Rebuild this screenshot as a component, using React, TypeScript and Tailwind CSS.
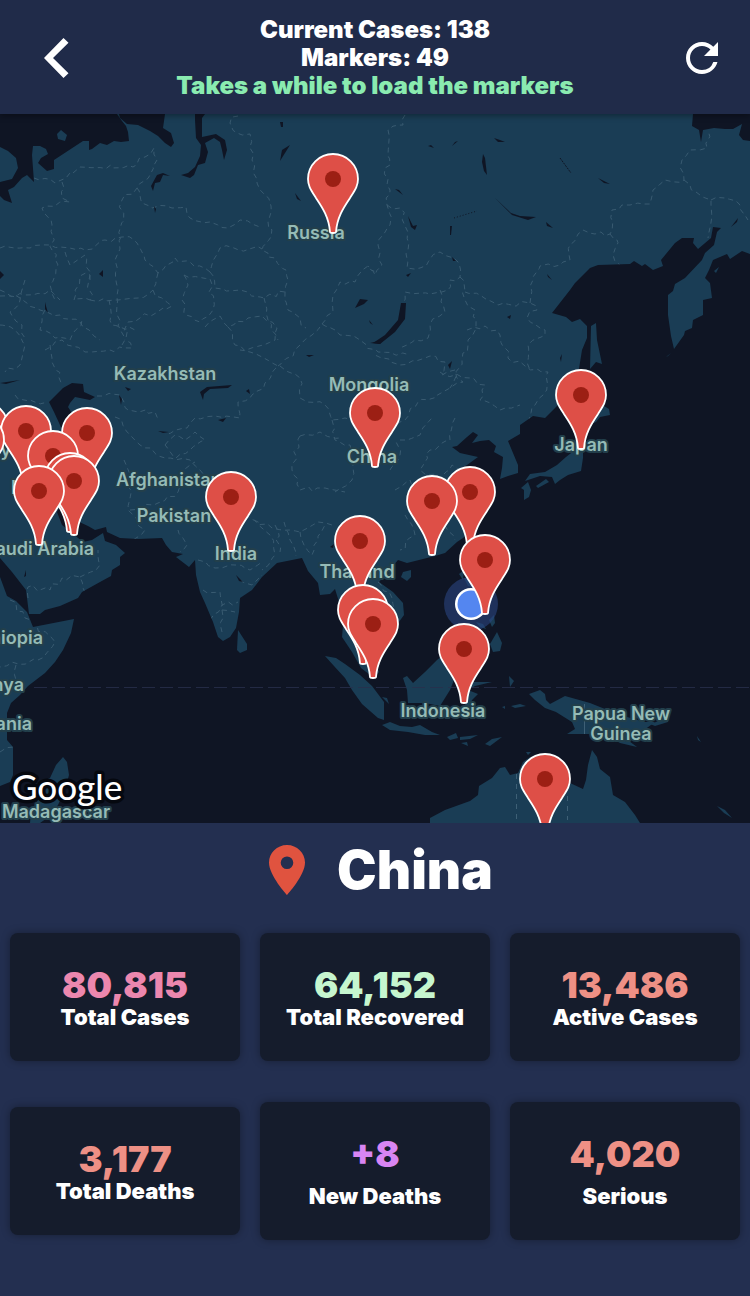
import { MdRefresh } from "react-icons/md";

type Point = [number, number];

// Coordinates of the map drawing share one system: x 0–750, y 114–823.
const SEAS: string[] = [
  // Barents and White Sea
  "0,114 117,114 122,121 126,126 128,132 129,141 121,142 114,141 107,145 100,143 92,149 89,150 89,141 83,141 54,160 54,169 47,171 38,163 41,158 48,154 46,149 40,146 33,146 32,155 34,182 27,175 22,178 14,187 8,190 12,203 4,200 0,196 0,182 12,179 18,168 16,158 8,151 0,147",
  // Kara Sea
  "119,114 165,114 163,128 171,133 174,143 171,147 165,143 158,136 150,131 138,125 127,124 120,118",
  // Gulf of Ob
  "195,114 205,114 202,118 202,137 216,134 225,140 227,150 224,160 222,150 220,142 214,138 205,143 208,152 205,163 198,165 194,175 190,178 181,175 188,173 195,167 200,156 201,145 196,138 195,120",
  "693,114 750,114 750,141 743,140 739,135 742,124 733,129 725,129 714,128 703,130 701,142 699,130 692,126",
  // Okhotsk, Pacific and Indian Ocean
  "552,313 570,290 575,283 590,268 598,265 630,264 634,261 642,266 645,264 653,270 663,266 661,260 675,243 682,238 694,238 693,243 698,249 711,238 713,227 721,228 717,232 714,245 705,253 702,260 685,278 675,284 673,291 668,295 668,315 671,336 674,349 684,335 685,331 692,328 693,320 703,315 703,300 712,298 710,283 705,278 709,270 713,260 727,254 730,259 742,251 750,254 750,823 0,823 0,786 10,782 13,775 13,747 7,740 7,713 11,703 20,695 28,686 45,673 55,662 63,650 71,633 74,619 33,627 27,612 16,601 7,596 0,577 0,558 12,572 26,590 29,614 40,614 45,610 60,606 78,598 82,592 100,582 111,576 112,570 120,565 120,557 125,553 116,545 105,541 103,533 92,540 83,542 72,533 62,525 57,512 60,506 66,508 75,520 88,526 95,530 106,527 107,532 120,538 138,539 162,538 166,545 172,552 183,554 176,557 189,567 195,560 196,575 200,592 205,603 213,622 218,637 223,641 230,637 236,628 239,612 240,598 252,590 262,577 277,563 302,558 308,571 318,583 320,595 330,594 335,589 340,605 343,625 342,637 352,652 361,668 374,678 379,672 372,652 366,640 368,622 378,618 388,628 396,626 404,615 403,603 393,592 379,582 387,573 398,560 407,563 435,556 445,553 457,542 463,538 476,525 480,505 475,485 461,468 467,465 478,457 460,453 452,447 457,446 467,437 473,432 478,435 472,443 480,441 489,440 496,446 494,452 503,457 502,468 500,479 508,476 518,473 518,465 508,441 520,434 520,425 533,416 545,418 556,407 570,392 578,375 582,350 587,338 587,326 580,319 572,322 566,317",
  // Caspian
  "49,402 63,388 72,383 83,384 84,392 95,397 90,400 75,397 70,403 68,407 74,416 84,452 70,454 60,425 54,412",
  // Lakes and rivers
  "401,303 406,303 405,319 395,332 380,344 373,343 385,335 398,320",
  "151,186 157,175 163,173 170,176 163,175 160,182 155,183 153,191",
  "280,161 282,150 290,145 285,153",
  "280,122 283,122 283,127 281,127",
  "154,206 156,209 155,213",
  "295,193 301,201 297,199",
  "99,274 103,270 103,277",
  "45,302 46,306 48,313 45,309",
  "355,308 360,299 368,300 364,304",
  "369,320 373,325 370,323",
  "0,271 4,275 0,279",
  "428,146 431,145 434,148",
  "452,146 455,142 458,141",
  "494,138 500,140 505,142 498,142",
  "483,154 485,158 487,175 484,171 482,162",
  "598,178 604,181 610,184 604,183",
  "395,189 399,190 403,195",
  "408,216 413,226 417,225 415,230 411,227",
  "495,198 511,213 520,216 536,217 528,220 512,215",
  "546,222 553,228 547,226",
  "450,235 450,226 452,226 451,235",
  "452,257 456,261 453,261",
  "406,275 411,273 408,277",
  "547,274 552,280 548,277",
  "507,317 511,315 510,319",
  "731,227 738,218 737,222",
  "200,392 207,387 232,385 228,388 210,389 204,394 203,400",
  "125,387 131,389 128,391",
  "119,395 122,399 121,405",
  "246,391 249,389 250,394",
  "158,431 169,432 163,433",
  "218,420 226,418 223,422",
  "306,355 314,355 309,357",
  "370,343 383,340 380,344",
  "0,383 20,380 6,384",
  "560,358 562,354 561,362",
  "448,365 452,361 450,369",
  "24,577 26,570 26,576",
  "330,547 334,544 333,548",
  "236,575 243,582 239,581",
];

const ISLANDS: string[] = [
  "57,134 61,130 67,135 65,141 58,139",
  "591,326 596,323 597,340 602,364 596,362 590,369",
  "714,271 719,267 716,273",
  "666,357 671,353 668,356",
  // Japan
  "591,424 596,412 604,406 609,409 610,415 600,417 596,422",
  "583,450 583,458 581,471 568,475 560,480 555,484 552,477 540,476 525,481 530,474 545,472 557,465 566,457 575,450",
  "521,488 528,482 531,490 529,497 524,500 524,490",
  "536,486 546,479 549,482 538,488",
  // Hainan, Taiwan, Philippines
  "403,572 411,570 411,577 407,581 401,577",
  "459,574 464,570 463,580",
  "464,578 469,578 473,587 468,586",
  "476,622 483,624 486,629 480,627",
  "489,620 494,615 495,623 492,627",
  "490,644 497,632 502,643 500,651 493,652",
  // Sri Lanka and Madagascar
  "238,630 247,644 247,650 240,653 237,650",
  "63,757 67,762 69,775 65,790 58,805 50,816 40,823 30,823 31,812 38,800 36,784 50,778 56,765",
  // Indonesia
  "325,656 336,658 345,664 360,675 372,686 384,702 384,720 378,718 362,704 352,690 345,678 334,666",
  "382,725 390,722 400,726 412,727 420,725 432,732 440,735 425,735 408,732 390,730",
  "447,737 456,733 458,738 450,740",
  "460,737 478,735 470,739 460,740",
  "485,744 492,739 502,737 490,746",
  "461,743 467,742 468,746",
  "382,697 387,698 389,704",
  "403,678 407,676 413,683 425,672 437,660 446,653 453,664 456,675 450,690 440,706 425,703 408,703 407,690",
  "466,682 492,682 475,686 468,690 478,694 472,700 468,710 463,700",
  "509,676 514,681 510,687",
  "511,706 520,704 526,706 515,708",
  "502,707 505,706 505,709",
  // New Guinea
  "529,694 540,690 545,694 546,700 550,704 565,696 590,703 620,715 645,722 655,722 640,733 625,738 637,747 620,743 606,735 592,734 567,734 575,729 572,722 556,712 545,708 535,700",
  "650,724 668,718 668,722 655,726",
  // Australia and Pacific islands
  "430,818 445,810 470,801 478,795 479,786 492,778 500,768 505,767 510,775 518,773 523,762 530,757 560,770 570,783 583,789 586,780 588,765 592,750 597,757 600,769 610,777 613,795 625,802 635,815 640,823 430,823",
  "526,752 531,752 528,755",
  "717,806 725,810 732,818 724,813",
  "697,736 701,742 698,740",
];

const BORDERS: Point[][] = [
  [[238, 116], [230, 123], [237, 133], [250, 134], [252, 160], [257, 183], [265, 195], [271, 206], [268, 222], [271, 237], [262, 250], [275, 258], [286, 270], [288, 280], [285, 293], [288, 310], [300, 318], [306, 328]],
  [[34, 178], [55, 183], [66, 178], [80, 167], [133, 167], [145, 157], [154, 148], [157, 160], [150, 175], [137, 188], [122, 200], [121, 237], [115, 260], [118, 290], [118, 325], [125, 340]],
  [[137, 188], [142, 203], [152, 208], [172, 208], [186, 207], [190, 218], [210, 222], [228, 228], [240, 220], [262, 228]],
  [[62, 182], [62, 198], [70, 202], [42, 208], [52, 225], [52, 250], [58, 265], [50, 285], [55, 300]],
  [[0, 248], [30, 248], [50, 245], [85, 250], [105, 240], [122, 237], [137, 243], [145, 260], [158, 273], [175, 258], [190, 262], [210, 272], [220, 248], [262, 249]],
  [[158, 273], [153, 290], [172, 306], [140, 318], [128, 322], [122, 345]],
  [[210, 272], [215, 288], [240, 290], [264, 298], [285, 292]],
  [[184, 275], [210, 279], [213, 310], [200, 322], [186, 315], [182, 300], [188, 285], [184, 275]],
  [[205, 327], [220, 316], [228, 327], [248, 318], [262, 316], [277, 328], [275, 340], [240, 350]],
  [[264, 298], [268, 320], [278, 340]],
  [[228, 327], [235, 345], [250, 352], [278, 366], [265, 383], [250, 398], [238, 402], [240, 418], [215, 416], [195, 418], [187, 428], [165, 435]],
  [[278, 366], [300, 345], [312, 335], [322, 324], [340, 335], [360, 340], [378, 352], [410, 355]],
  [[322, 324], [333, 312], [333, 295], [340, 282], [355, 282], [368, 266], [378, 272]],
  [[280, 366], [300, 378], [300, 398], [325, 405], [332, 420], [345, 418], [375, 435], [405, 420], [418, 402], [450, 388], [463, 382], [455, 370], [442, 375], [445, 362], [430, 356], [400, 365], [375, 355]],
  [[405, 115], [403, 125], [388, 130], [390, 165], [385, 168], [390, 190], [387, 205], [390, 225], [378, 245], [382, 265], [375, 275], [368, 266]],
  [[387, 205], [400, 208], [406, 228], [408, 250], [407, 268], [420, 268], [440, 252], [458, 262], [460, 277], [450, 280], [448, 290], [430, 294], [405, 292], [402, 305]],
  [[440, 290], [445, 312], [430, 325], [428, 338], [400, 348]],
  [[460, 277], [465, 300], [475, 310], [476, 325], [468, 345], [462, 360], [450, 388]],
  [[465, 292], [480, 295], [498, 305], [530, 303], [537, 310], [527, 318], [545, 330], [545, 335], [528, 345], [530, 370]],
  [[530, 303], [533, 280], [540, 266], [560, 265], [570, 260], [570, 245], [583, 230], [595, 234], [610, 234], [612, 210], [630, 205], [650, 204], [653, 190], [665, 180], [684, 180], [682, 160], [690, 150], [707, 148], [708, 130]],
  [[684, 180], [700, 195], [711, 200], [708, 238]],
  [[711, 200], [725, 198], [740, 205], [748, 220]],
  [[610, 234], [617, 240], [613, 255], [620, 265]],
  [[467, 330], [485, 326], [500, 335], [508, 358], [525, 366], [548, 372], [543, 395], [535, 405], [526, 425]],
  [[440, 372], [470, 378], [485, 385], [480, 400], [500, 410], [520, 405]],
  [[455, 418], [450, 440], [430, 450], [420, 470], [440, 478], [452, 465], [470, 470]],
  [[400, 440], [420, 435], [432, 418]],
  [[395, 490], [410, 480], [420, 495], [405, 515], [415, 535], [400, 550]],
  [[390, 470], [400, 455], [395, 440]],
  [[440, 480], [450, 500], [440, 520], [455, 540]],
  [[332, 420], [335, 440], [350, 445], [352, 480], [335, 492]],
  [[300, 436], [320, 432], [340, 438]],
  [[300, 436], [292, 470], [300, 490], [325, 488], [345, 492]],
  [[97, 396], [120, 395], [128, 410], [155, 412], [160, 420]],
  [[115, 417], [140, 445], [165, 458], [190, 460], [200, 470], [208, 478]],
  [[165, 445], [175, 435], [185, 440], [195, 432], [205, 440], [190, 450], [176, 458], [165, 445]],
  [[124, 460], [130, 480], [128, 510], [145, 530], [133, 540]],
  [[130, 510], [158, 503], [178, 492], [180, 475], [195, 462]],
  [[178, 530], [187, 545], [180, 552]],
  [[235, 500], [250, 518], [272, 528], [300, 532], [318, 522], [332, 525]],
  [[254, 520], [270, 535], [275, 555], [262, 570]],
  [[275, 525], [280, 552]],
  [[300, 532], [304, 545], [312, 555], [318, 540], [325, 525]],
  [[284, 522], [290, 540], [296, 556]],
  [[198, 560], [215, 568], [235, 565], [250, 570], [262, 562]],
  [[203, 590], [220, 592], [222, 610], [235, 612]],
  [[210, 620], [222, 605], [238, 602]],
  [[222, 610], [222, 632]],
  [[240, 580], [252, 585], [262, 575]],
  [[28, 598], [28, 587], [50, 590], [62, 578], [80, 577], [85, 592]],
  [[80, 577], [100, 565], [98, 550]],
  [[10, 600], [25, 618], [55, 642], [38, 660], [0, 667]],
  [[16, 665], [16, 680]],
  [[0, 752], [13, 747]],
  [[0, 290], [20, 298], [40, 310], [60, 315], [80, 322], [100, 340]],
  [[0, 325], [15, 330], [25, 345], [20, 365], [5, 372]],
  [[25, 280], [20, 300], [10, 312], [22, 325], [25, 338]],
  [[74, 300], [80, 276], [90, 275], [90, 300], [74, 300]],
  [[90, 300], [118, 300], [138, 298], [153, 290]],
  [[45, 310], [40, 330], [55, 338], [70, 340], [82, 320]],
  [[50, 345], [52, 358], [62, 385]],
  [[45, 350], [62, 340], [85, 352], [110, 350], [132, 348], [125, 340]],
  [[15, 395], [30, 400], [48, 402]],
  [[65, 252], [70, 265], [85, 255], [90, 280]],
  [[109, 300], [112, 325], [135, 330]],
  [[0, 296], [25, 295], [50, 290], [60, 300]],
  [[378, 582], [392, 598], [394, 610]],
  [[410, 682], [420, 680], [438, 678], [442, 660]],
];

// Gives a coarse border line the small bends of a surveyed one.
function meander(points: Point[], seed: number): string {
  let state = seed * 7919 + 17;
  const next = () => {
    state = (state * 1103515245 + 12345) % 2147483648;
    return state / 2147483648 - 0.5;
  };
  const out: string[] = [`${points[0][0]},${points[0][1]}`];
  for (let i = 1; i < points.length; i++) {
    const [ax, ay] = points[i - 1];
    const [bx, by] = points[i];
    const steps = Math.max(1, Math.round(Math.hypot(bx - ax, by - ay) / 6));
    for (let s = 1; s <= steps; s++) {
      const t = s / steps;
      const j = s === steps ? 0 : 5;
      out.push(`${(ax + (bx - ax) * t + next() * j).toFixed(1)},${(ay + (by - ay) * t + next() * j).toFixed(1)}`);
    }
  }
  return out.join(" ");
}

type Label = { text: string; x: number; y: number; anchor?: "start" | "middle" | "end" };

const LABELS: Label[] = [
  { text: "Russia", x: 316, y: 239 },
  { text: "Kazakhstan", x: 165, y: 380 },
  { text: "Mongolia", x: 369, y: 391 },
  { text: "China", x: 372, y: 463 },
  { text: "Turkey", x: 11, y: 456, anchor: "end" },
  { text: "Iraq", x: 11, y: 494, anchor: "start" },
  { text: "Afghanistan", x: 116, y: 486, anchor: "start" },
  { text: "Pakistan", x: 174, y: 522 },
  { text: "India", x: 236, y: 560 },
  { text: "Saudi Arabia", x: 94, y: 555, anchor: "end" },
  { text: "Thailand", x: 357, y: 578 },
  { text: "Japan", x: 581, y: 451 },
  { text: "Ethiopia", x: 43, y: 644, anchor: "end" },
  { text: "Kenya", x: 24, y: 691, anchor: "end" },
  { text: "Tanzania", x: 32, y: 730, anchor: "end" },
  { text: "Indonesia", x: 443, y: 717 },
  { text: "Papua New", x: 621, y: 720 },
  { text: "Guinea", x: 621, y: 740 },
  { text: "Madagascar", x: 56, y: 818 },
];

// Centre of each marker's dot, back to front.
const MARKERS: Point[] = [
  [333, 179], [581, 395], [375, 413], [-17, 427], [26, 431], [87, 433], [-21, 440], [53, 456],
  [70, 478], [74, 481], [39, 491], [470, 492], [231, 497], [432, 501], [360, 541], [485, 560],
  [363, 610], [373, 624], [464, 649], [545, 779],
];

function WorldMap() {
  return (
    <svg
      viewBox="0 114 750 709"
      className="block h-auto w-full bg-[#1a3d55]"
      role="img"
      aria-label="Map of reported cases"
    >
      <g fill="none" stroke="#537489" strokeWidth="1" strokeDasharray="5 4" opacity="0.55">
        {BORDERS.map((line, i) => (
          <polyline key={i} points={meander(line, i + 1)} />
        ))}
      </g>
      <g fill="#0f1524">
        {SEAS.map((points) => (
          <polygon key={points} points={points} />
        ))}
      </g>
      <g fill="none" stroke="#0f1524" strokeWidth="1">
        <path d="M560 158L571 173" strokeDasharray="2 1" />
        <path d="M454 218L477 211" strokeDasharray="1 2" />
      </g>
      <g fill="#1a3d55">
        {ISLANDS.map((points) => (
          <polygon key={points} points={points} />
        ))}
      </g>
      <path d="M34 687.5H750" stroke="#28304d" strokeWidth="1" strokeDasharray="13 5" opacity="0.8" />
      <g fill="none" stroke="#3e6076" strokeWidth="1" strokeDasharray="5 5">
        <path d="M516.5 774V820M567.5 786V820" />
        <path d="M584.5 704V734" strokeDasharray="none" />
      </g>
      <g
        className="font-['Inter',sans-serif] text-[18px] font-semibold"
        fill="#95bbb6"
        stroke="#223f4b"
        strokeWidth="4"
        strokeLinejoin="round"
        paintOrder="stroke"
      >
        {LABELS.map((label) => (
          <text key={label.text} x={label.x} y={label.y} textAnchor={label.anchor ?? "middle"}>
            {label.text}
          </text>
        ))}
      </g>
      <circle cx="471" cy="604" r="27" fill="#2a4580" fillOpacity="0.6" />
      <circle cx="471" cy="604" r="16" fill="#fff" />
      <circle cx="471" cy="604" r="13.5" fill="#5486f0" />
      {MARKERS.map(([x, y]) => (
        <g key={`${x},${y}`} transform={`translate(${x} ${y})`}>
          <path
            d="M-3 53C-4 38-11 28-17 19C-22 11-25 7-25 0A25 25 0 0 1 25 0C25 7 22 11 17 19C11 28 4 38 3 53Q3 54 0 54Q-3 54-3 53Z"
            fill="#de4f47"
            stroke="#fff"
            strokeWidth="1.8"
          />
          <circle r="8" fill="#9c1f14" />
        </g>
      ))}
      <text
        x="12"
        y="800"
        className="font-['Lato',sans-serif] text-[35px] font-medium"
        fill="#fff"
        stroke="#05080f"
        strokeWidth="7"
        strokeLinejoin="round"
        paintOrder="stroke"
      >
        Google
      </text>
    </svg>
  );
}

type Stat = { value: string; label: string; color: string; spaced?: boolean };

const STATS: Stat[] = [
  { value: "80,815", label: "Total Cases", color: "text-[#ec87ae]" },
  { value: "64,152", label: "Total Recovered", color: "text-[#c6f6cf]" },
  { value: "13,486", label: "Active Cases", color: "text-[#ee9085]" },
  { value: "3,177", label: "Total Deaths", color: "text-[#ee9085]" },
  { value: "+8", label: "New Deaths", color: "text-[#d885f3]", spaced: true },
  { value: "4,020", label: "Serious", color: "text-[#ee9085]", spaced: true },
];

function StatCard({ value, label, color, spaced }: Stat) {
  return (
    <div className="flex flex-col-reverse items-center rounded-lg bg-[#151c2c] py-8 shadow-[0_0_8px_rgba(0,0,0,0.35)]">
      <dt className={spaced ? "mt-2.5 text-[22px] leading-6" : "text-[22px] leading-6"}>{label}</dt>
      <dd className={`text-[36px] leading-10 ${color}`}>{value}</dd>
    </div>
  );
}

export default function App() {
  return (
    <div className="flex min-h-screen flex-col bg-[#232f50] font-['Inter',sans-serif] font-black text-white">
      <header className="relative z-10 grid grid-cols-[1fr_auto_1fr] items-center bg-[#202b49] px-6 pt-4 pb-3.5 shadow-[0_2px_6px_rgba(0,0,0,0.35)]">
        <button type="button" aria-label="Back" className="flex w-16 justify-center justify-self-start">
          <svg viewBox="0 0 26 40" className="h-10 w-[26px]" fill="currentColor" aria-hidden="true">
            <path d="M1 20L20.500 0L25.500 4.800L10 20L25.500 35.200L20.500 40Z" />
          </svg>
        </button>
        <div className="text-center text-2xl leading-7">
          <p>Current Cases: 138</p>
          <p>Markers: 49</p>
          <p className="text-[#8aebb0]">Takes a while to load the markers</p>
        </div>
        <button type="button" aria-label="Reload" className="justify-self-end">
          <MdRefresh className="size-12" />
        </button>
      </header>
      <main>
        <WorldMap />
        <div className="flex items-center justify-center gap-8 pt-[17px] pl-3">
          <svg viewBox="0 0 36 50" className="h-[50px] w-9" aria-hidden="true">
            <path
              fillRule="evenodd"
              fill="#e0533f"
              d="M18 0C8 0 0 8 0 17.500C0 30.500 18 50 18 50S36 30.500 36 17.500C36 8 28 0 18 0ZM18 11.500A6.300 6.300 0 1 1 18 24.100A6.300 6.300 0 1 1 18 11.500Z"
            />
          </svg>
          <h1 className="text-[53px] leading-[60px]">China</h1>
        </div>
        <dl className="grid grid-cols-3 items-center gap-x-5 gap-y-[41px] px-2.5 pt-[33px] pb-14">
          {STATS.map((stat) => (
            <StatCard key={stat.label} {...stat} />
          ))}
        </dl>
      </main>
    </div>
  );
}
